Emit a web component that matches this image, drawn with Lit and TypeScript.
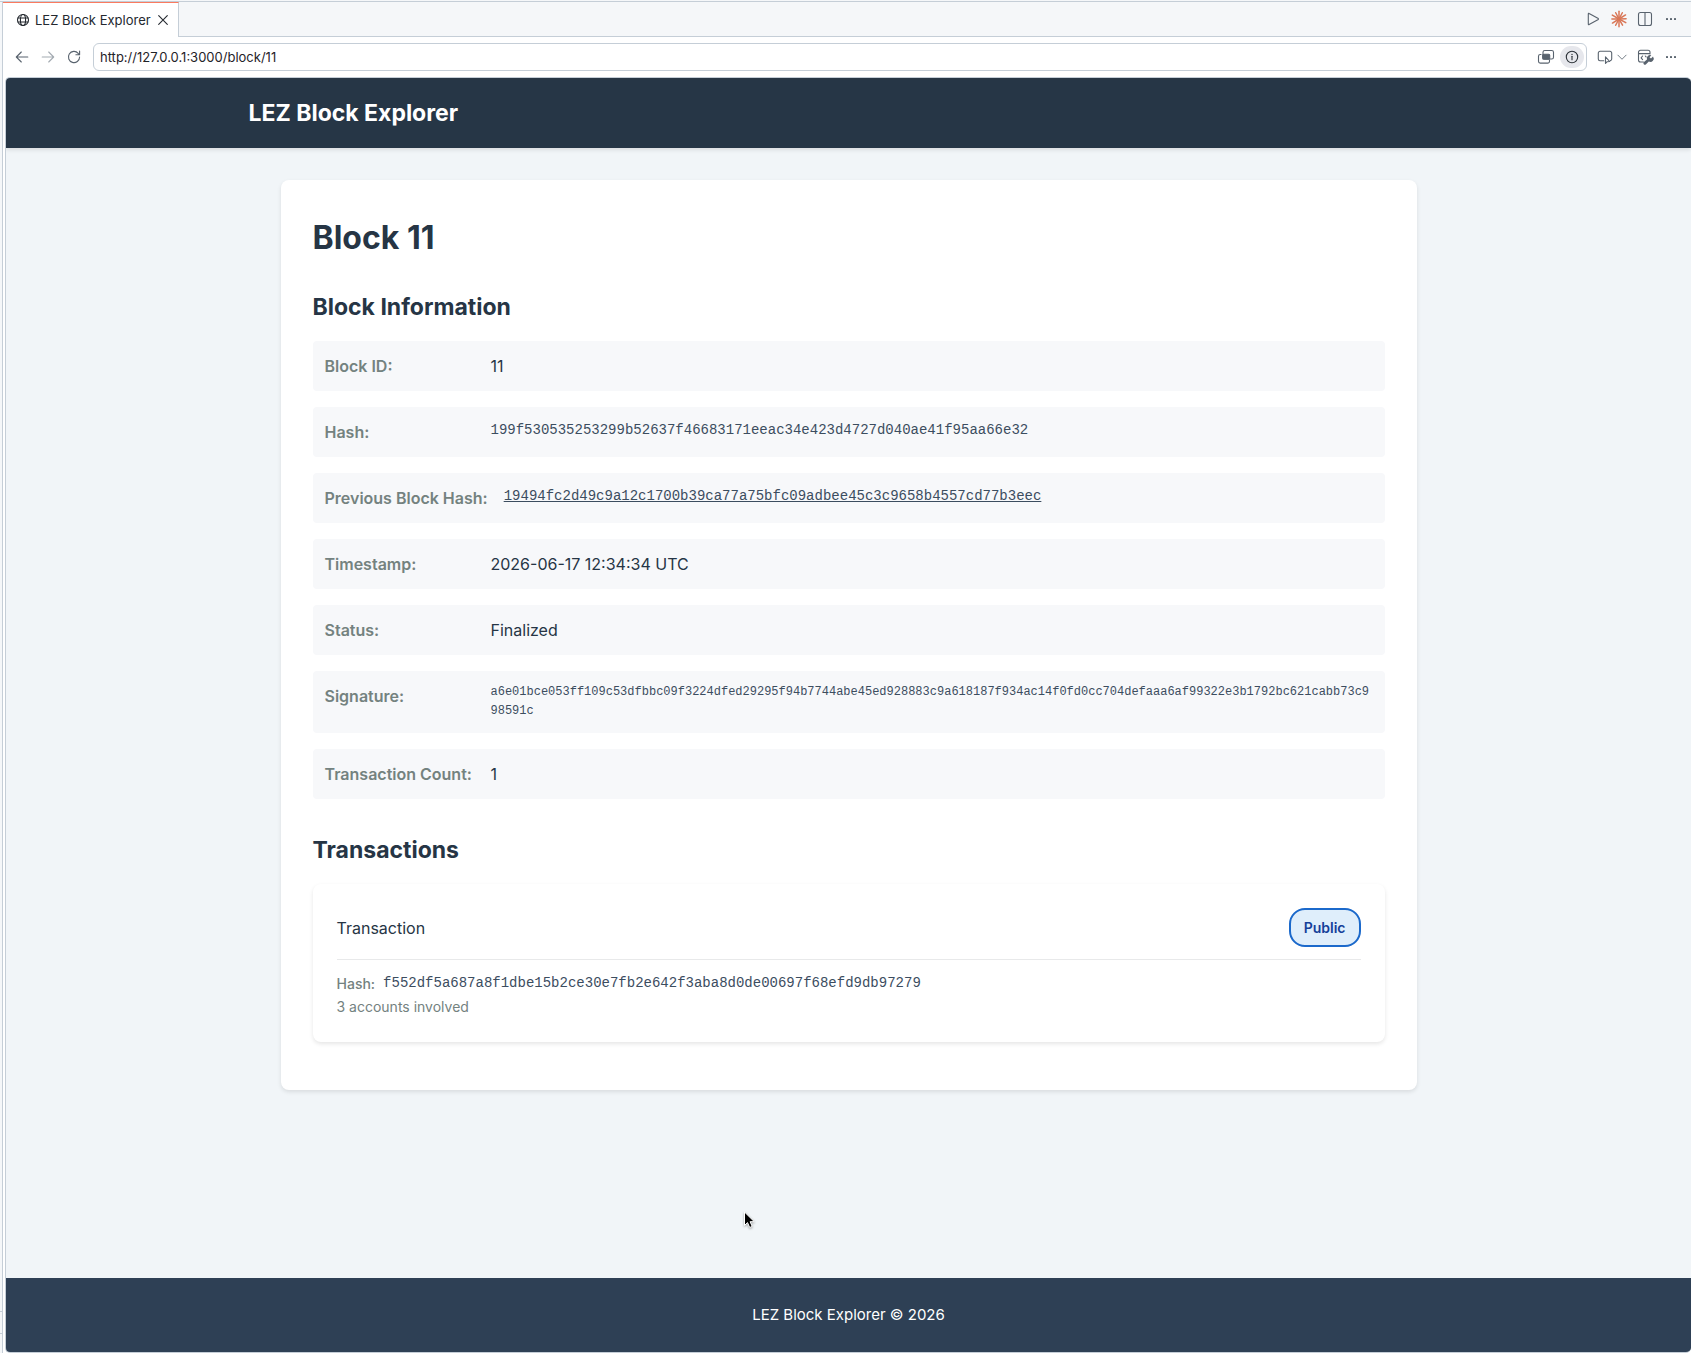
import { LitElement, html, css, svg, nothing } from "lit";
import { customElement, property } from "lit/decorators.js";

interface Field {
  label: string;
  value: string;
  kind?: "hash" | "link" | "signature";
}

const FIELDS: Field[] = [
  { label: "Block ID:", value: "11" },
  { label: "Hash:", value: "199f530535253299b52637f46683171eeac34e423d4727d040ae41f95aa66e32", kind: "hash" },
  { label: "Previous Block Hash:", value: "19494fc2d49c9a12c1700b39ca77a75bfc09adbee45c3c9658b4557cd77b3eec", kind: "link" },
  { label: "Timestamp:", value: "2026-06-17 12:34:34 UTC" },
  { label: "Status:", value: "Finalized" },
  {
    label: "Signature:",
    value:
      "a6e01bce053ff109c53dfbbc09f3224dfed29295f94b7744abe45ed928883c9a618187f934ac14f0fd0cc704defaaa6af99322e3b1792bc621cabb73c998591c",
    kind: "signature",
  },
  { label: "Transaction Count:", value: "1" },
];

const RAYS = [0, 28, 58, 88, 118, 150, 180, 208, 238, 270, 300, 332];

const ICONS = {
  globe: svg`<circle cx="8" cy="8" r="5.5"/><ellipse cx="8" cy="8" rx="2.6" ry="5.5"/><path d="M3 6h10M3 10h10"/>`,
  close: svg`<path d="M3.7 3.7l8.6 8.6M12.3 3.7l-8.6 8.6"/>`,
  back: svg`<path d="M13.8 8H2.4M7.3 3L2.3 8l5 5"/>`,
  forward: svg`<path d="M2.2 8h11.4M8.7 3l5 5-5 5"/>`,
  reload: svg`<path d="M13.6 8A5.6 5.6 0 1 1 12.2 4.3L13.4 5.6M13.6 2v3.7H9.9"/>`,
  play: svg`<path d="M3.3 2.8v10.4a.5.5 0 0 0 .8.4l9.2-5.2a.5.5 0 0 0 0-.8L4.1 2.4a.5.5 0 0 0-.8.4z"/>`,
  burst: svg`${RAYS.map(
    (a, i) => svg`<path d="M8 8V${i % 2 ? 0.9 : 0.3}" stroke="#d97757" stroke-width="1.5" transform="rotate(${a} 8 8)"/>`,
  )}`,
  split: svg`<rect x="1.5" y="1.5" width="13" height="13" rx="2"/><path d="M8 1.5v13"/>`,
  dots: svg`<g fill="currentColor" stroke="none"><rect x="3" y="7" width="2" height="2" rx=".6"/><rect x="7" y="7" width="2" height="2" rx=".6"/><rect x="11" y="7" width="2" height="2" rx=".6"/></g>`,
  overlap: svg`<rect x="5" y="1.5" width="10.5" height="8.5" rx="1.8"/><path d="M3 5.500h-.7A1.800 1.800 0 0 0 .5 7.300v5A1.800 1.800 0 0 0 2.300 14.100h7.400a1.800 1.800 0 0 0 1.800-1.800V11"/><rect x="4.700" y="5.200" width="7" height="5" rx="1" fill="currentColor"/>`,
  info: svg`<circle cx="8" cy="8" r="5.7"/><path d="M8 7.3v3.500"/><circle cx="8" cy="5.4" r=".7" fill="currentColor" stroke="none"/>`,
  inspect: svg`<path d="M6.8 11.7H3A1.700 1.700 0 0 1 1.300 10V4A1.700 1.700 0 0 1 3 2.300h10A1.700 1.700 0 0 1 14.700 4v6a1.700 1.700 0 0 1-1.200 1.600"/><path d="M8.500 7.800v6.600l1.700-1.700 2.500-.2z"/>`,
  chevron: svg`<path d="M2.500 5.500L8 11l5.500-5.500"/>`,
  devtools: svg`<path d="M6.500 13H3.500a2 2 0 0 1-2-2V3.300a2 2 0 0 1 2-2h7.500a2 2 0 0 1 2 2V5M1.500 4.600H13M5.600 7L4.100 8.800l1.500 1.800M8.300 7l.8.900"/><path d="M16 7.600l-2 1.900-1.500-1.300 1.800-2a3.300 3.300 0 0 0-4.300 4.200L6.700 13.300a1.500 1.500 0 0 0 2.100 2.100l3-2.900A3.300 3.300 0 0 0 16 7.600z" fill="currentColor" stroke="none"/>`,
};

@customElement("ui-icon")
class UiIcon extends LitElement {
  @property() name: keyof typeof ICONS = "dots";

  static styles = css`
    :host { display: block; flex: none; width: 16px; height: 16px; }
    .glyph { display: block; width: 100%; height: 100%; fill: none; stroke: currentColor; stroke-width: 1.1; stroke-linecap: round; stroke-linejoin: round; overflow: visible; }
  `;

  render() {
    return html`<svg class="glyph" viewBox="0 0 16 16" aria-hidden="true">${ICONS[this.name]}</svg>`;
  }
}

@customElement("browser-chrome")
class BrowserChrome extends LitElement {
  static styles = css`
    :host { display: block; color: #59636e; font-family: Inter, sans-serif; }
    button { display: flex; align-items: center; justify-content: center; flex: none; width: 22px; height: 22px; margin: 0; padding: 0; border: 0; border-radius: 5px; background: none; color: inherit; }
    .tabs { display: flex; height: 35px; background: #f5f7f9; }
    .tab { display: flex; align-items: center; box-sizing: border-box; padding: 0 4px 0 12px; border-top: 1px solid #fa7a5f; border-right: 1px solid #c5ced7; background: #fff; color: #24292f; font-size: 13px; }
    .name { margin: 0 1px 0 4px; }
    .fill { display: flex; flex: 1; align-items: center; justify-content: flex-end; gap: 4px; padding-right: 9px; border-bottom: 1px solid #c5ced7; }
    .bar { display: flex; align-items: center; gap: 4px; height: 40px; padding: 0 9px 0 8px; background: #fff; }
    .off { color: #a4abb2; }
    .address { display: flex; flex: 1; align-items: center; box-sizing: border-box; height: 28px; margin: 0 4px; padding: 0 2px 0 6px; gap: 3px; border: 1px solid #c5ced7; border-radius: 6px; }
    .url { flex: 1; min-width: 0; padding: 0; border: 0; outline: 0; background: none; color: #1f2328; font: 13px/20px Inter, sans-serif; }
    .on { width: 24px; border-radius: 11px; background: #e6e7ec; color: #2c3238; }
    .wide { width: 35px; }
    .small { width: 12px; height: 12px; margin-left: 3px; }
  `;

  render() {
    return html`
      <div class="tabs">
        <div class="tab">
          <ui-icon name="globe"></ui-icon>
          <span class="name">LEZ Block Explorer</span>
          <button aria-label="Close tab"><ui-icon name="close"></ui-icon></button>
        </div>
        <div class="fill">
          <button aria-label="Run"><ui-icon name="play"></ui-icon></button>
          <button aria-label="Assistant"><ui-icon name="burst"></ui-icon></button>
          <button aria-label="Split editor"><ui-icon name="split"></ui-icon></button>
          <button aria-label="More actions"><ui-icon name="dots"></ui-icon></button>
        </div>
      </div>
      <div class="bar">
        <button aria-label="Back"><ui-icon name="back"></ui-icon></button>
        <button class="off" aria-label="Forward"><ui-icon name="forward"></ui-icon></button>
        <button aria-label="Reload"><ui-icon name="reload"></ui-icon></button>
        <div class="address">
          <input class="url" aria-label="Address" value="http://127.0.0.1:3000/block/11" />
          <button aria-label="Share with agent"><ui-icon name="overlap"></ui-icon></button>
          <button class="on" aria-label="Site information"><ui-icon name="info"></ui-icon></button>
        </div>
        <button class="wide" aria-label="Select element">
          <ui-icon name="inspect"></ui-icon><ui-icon class="small" name="chevron"></ui-icon>
        </button>
        <button aria-label="Developer tools"><ui-icon name="devtools"></ui-icon></button>
        <button aria-label="More"><ui-icon name="dots"></ui-icon></button>
      </div>
    `;
  }
}

@customElement("block-page")
class BlockPage extends LitElement {
  static styles = css`
    :host { display: flex; flex-direction: column; background: #f1f5f8; color: #263545; font: 16px/26px Inter, sans-serif; }
    .head { position: relative; padding: 16px 32px; background: #263646; box-shadow: 0 2px 4px rgba(0, 0, 0, 0.1); }
    .inner { max-width: 1200px; margin: 0 auto; }
    .brand { color: #fff; font-size: 23px; font-weight: 700; line-height: 38px; text-decoration: none; display: inline-block; vertical-align: top; }
    .main { flex: 1; box-sizing: border-box; width: 100%; max-width: 1200px; margin: 0 auto; padding: 32px; }
    .card { padding: 32px; border-radius: 8px; background: #fff; box-shadow: 0 2px 4px rgba(0, 0, 0, 0.1); }
    h1 { margin: 0 0 24px; font-size: 32px; line-height: 52px; }
    h2 { margin: 0 0 14px; font-size: 23px; line-height: 39px; }
    .fields { display: flex; flex-direction: column; gap: 16px; margin: 0 0 32px; }
    .field { display: flex; gap: 16px; padding: 12px; border-radius: 4px; background: #f7f8fa; }
    dt { flex: none; min-width: 150px; color: #74827f; font-weight: 600; }
    dd { flex: 1; min-width: 0; margin: 0; }
    .mono { color: #3c4d5f; font: 14px/23px "Liberation Mono", monospace; word-break: break-all; }
    .signature { font-size: 12px; line-height: 19px; }
    .link { color: inherit; }
    .tx { display: block; margin-bottom: 16px; padding: 24px; border-radius: 8px; background: #fff; box-shadow: 0 2px 4px rgba(0, 0, 0, 0.1); color: inherit; text-decoration: none; }
    .top { display: flex; align-items: center; justify-content: space-between; padding-bottom: 12px; margin-bottom: 12px; border-bottom: 1px solid #e8e9ea; }
    .badge { padding: 6px 13px; border: 2px solid #1b69cb; border-radius: 16px; background: #dfeefb; color: #153f9a; font-size: 14px; font-weight: 600; line-height: 23px; }
    .body { color: #74827f; font-size: 14px; line-height: 23px; }
    .row { display: flex; gap: 8px; }
    .key { font-weight: 500; }
    .foot { padding: 24px; background: #2e4055; color: #fff; font-size: 15px; text-align: center; }
  `;

  private value(f: Field) {
    if (f.kind === "link") return html`<dd class="mono"><a class="link" href="#">${f.value}</a></dd>`;
    if (f.kind === "signature") return html`<dd class="mono signature">${f.value}</dd>`;
    return html`<dd class=${f.kind ? "mono" : nothing}>${f.value}</dd>`;
  }

  render() {
    return html`
      <header class="head"><div class="inner"><a class="brand" href="#">LEZ Block Explorer</a></div></header>
      <main class="main">
        <article class="card">
          <h1>Block 11</h1>
          <h2>Block Information</h2>
          <dl class="fields">
            ${FIELDS.map((f) => html`<div class="field"><dt>${f.label}</dt>${this.value(f)}</div>`)}
          </dl>
          <h2>Transactions</h2>
          <a class="tx" href="#">
            <div class="top"><span>Transaction</span><span class="badge">Public</span></div>
            <div class="body">
              <div class="row"><span class="key">Hash:</span><span class="mono">f552df5a687a8f1dbe15b2ce30e7fb2e642f3aba8d0de00697f68efd9db97279</span></div>
              <div>3 accounts involved</div>
            </div>
          </a>
        </article>
      </main>
      <footer class="foot">LEZ Block Explorer © 2026</footer>
    `;
  }
}

@customElement("app-root")
class AppRoot extends LitElement {
  static styles = css`
    :host { display: flex; position: relative; box-sizing: border-box; min-height: 100vh; padding-top: 1px; background: #f5f7f9; }
    .gutter { display: flex; flex-direction: column; justify-content: flex-end; flex: none; width: 2px; border-top: 1px solid #c5ced7; border-right: 1px solid #c5ced7; }
    .notch { height: 21px; margin-bottom: 19px; border: solid #c5ced7; border-width: 1px 0; }
    .window { display: flex; flex: 1; flex-direction: column; min-width: 0; border-top: 1px solid #c5ced7; background: #fff; }
    .view { flex: 1; margin-left: 2px; border: solid #c5ced7; border-width: 1px 0 1px 1px; border-radius: 5px; overflow: hidden; }
    .pointer { position: absolute; left: 743px; top: 1210px; width: 14px; height: 20px; filter: drop-shadow(0 1px 1px rgba(0, 0, 0, 0.35)); }
  `;

  render() {
    return html`
      <div class="gutter"><div class="notch"></div></div>
      <div class="window">
        <browser-chrome></browser-chrome>
        <block-page class="view"></block-page>
      </div>
      <svg class="pointer" viewBox="0 0 14 20" aria-hidden="true">
        <path d="M1.5 2v13.5l3-2.900 2.200 4.900 2.500-1.100-2.100-4.700h4.200z" fill="#000" stroke="#fff" stroke-width="1"/>
      </svg>
    `;
  }
}
